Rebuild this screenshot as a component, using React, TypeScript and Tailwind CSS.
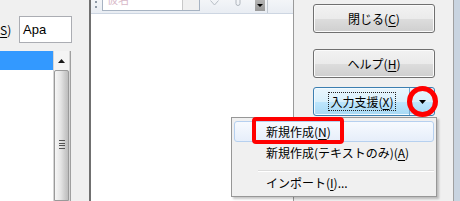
import React from 'react';

const Key: React.FC<{ k: string }> = ({ k }) => (
    <span className="underline underline-offset-[2px] decoration-1">{k}</span>
);

const LeftPane: React.FC = () => {
    return (
        <div className="flex w-[89px] shrink-0 flex-col">
            {/* label + text box */}
            <div className="flex h-[51px] items-start pt-[16px]">
                <div className="flex h-[27px] w-[19px] shrink-0 items-center overflow-hidden">
                    <span className="-ml-[4px] whitespace-nowrap leading-none">
                        (<Key k="S" />)
                    </span>
                </div>
                <div className="flex h-[27px] w-[53px] items-center border border-[#abadb3] bg-white px-[3px] font-['Liberation_Sans',sans-serif] text-[13px] leading-none">
                    Apa
                </div>
            </div>

            {/* list box with scrollbar */}
            <div className="flex flex-1">
                <div className="w-[53px] bg-white">
                    <div className="h-[19px] bg-[#3399ff]" />
                </div>
                <div className="flex w-[17px] flex-col border-x border-[#d6d6d6] bg-[#ececec]">
                    <div className="flex h-[19px] items-center justify-center bg-[#f4f4f4]">
                        <svg width="7" height="4" viewBox="0 0 7 4">
                            <polygon points="0,4 7,4 3.5,0" fill="#1a1a1a" />
                        </svg>
                    </div>
                    <div className="flex flex-1 justify-center rounded-t-[2px] border border-[#9a9a9a] bg-[linear-gradient(to_right,#f6f6f6_0%,#e4e4e4_45%,#cdcdcd_75%,#bdbdbd_100%)]">
                        <div className="mt-[69px] flex h-[9px] w-[6px] flex-col justify-between">
                            <div className="h-[1px] bg-[#555]" />
                            <div className="h-[1px] bg-[#555]" />
                            <div className="h-[1px] bg-[#555]" />
                            <div className="h-[1px] bg-[#555]" />
                        </div>
                    </div>
                </div>
                <div className="flex-1 border-l border-[#a0a0a0] bg-[#f0f0f0]" />
            </div>
        </div>
    );
};

const EditorPane: React.FC = () => {
    return (
        <div className="flex w-[205px] shrink-0 flex-col border-l-2 border-r border-l-[#707070] border-r-[#9a9a9a] bg-white">
            <div className="flex h-[14px] items-start border-b border-[#cdd6e2] bg-[linear-gradient(to_bottom,#f3f5f8,#e9edf3)]">
                {/* gripper */}
                <div className="ml-[4px] mt-[1px] flex flex-col gap-[3px]">
                    <div className="h-[2px] w-[2px] bg-[#8e99a6]" />
                    <div className="h-[2px] w-[2px] bg-[#8e99a6]" />
                </div>
                {/* combo box */}
                <div className="ml-[5px] flex h-[11px] w-[98px] overflow-hidden border-x border-b border-[#a7b3c2] bg-white">
                    <div className="flex-1 overflow-hidden pl-[4px] text-[11px] leading-none text-[#d8b8c8]">
                        <span className="relative -top-[6px]">仮名</span>
                    </div>
                    <div className="w-[17px] border-l border-[#c8c8c8] bg-[#f0f0f0]" />
                </div>
                {/* faded tool icons */}
                <svg className="ml-[10px]" width="9" height="6" viewBox="0 0 9 6">
                    <path d="M0.5 0.5 L4.5 5 L8.5 0.5" fill="none" stroke="#b8bec6" strokeWidth="1" />
                </svg>
                <svg className="ml-[16px]" width="6" height="6" viewBox="0 0 6 6">
                    <path d="M1 0 V3.5 A2 2 0 0 0 5 3.5 V0" fill="none" stroke="#b0b6be" strokeWidth="1" />
                </svg>
                <div className="ml-[14px] flex h-[11px] w-[10px] items-center justify-center bg-[linear-gradient(to_bottom,#b4b4b4,#999999)]">
                    <svg width="6" height="3" viewBox="0 0 6 3">
                        <polygon points="0,0 6,0 3,3" fill="#000" />
                    </svg>
                </div>
                <div className="ml-[2px] h-[13px] w-[1px] bg-[#c2c9d2]" />
            </div>
            <div className="flex-1 bg-white" />
        </div>
    );
};

const greyBtn =
    'flex h-[29px] w-[122px] items-center justify-center rounded-[3px] border border-[#707070] bg-[linear-gradient(to_bottom,#f2f2f2_0%,#ebebeb_50%,#dddddd_51%,#cfcfcf_100%)] shadow-[inset_0_0_0_1px_#fbfbfb] leading-none';

const ButtonPane: React.FC = () => {
    return (
        <div className="flex w-[159px] shrink-0 flex-col pl-[19px]">
            <div className={`${greyBtn} mt-[4px]`}>
                閉じる(<Key k="C" />)
            </div>
            <div className={`${greyBtn} mt-[16px]`}>
                ヘルプ(<Key k="H" />)
            </div>
            <div className="mt-[9px] flex h-[29px] w-[122px] rounded-[3px] border border-[#3c7fb1] bg-[linear-gradient(to_bottom,#eaf6fd_0%,#d9f0fc_50%,#bee6fd_51%,#a7d9f5_100%)] shadow-[inset_0_0_0_1px_#f2faff]">
                <div className="flex w-[95px] items-center justify-center pl-[1px]">
                    <span className="flex h-[19px] items-center border border-dotted border-[#222] px-[1px] leading-none">
                        入力支援(<Key k="X" />)
                    </span>
                </div>
                <div className="w-[1px] bg-[#6fa7cf]" />
                <div className="flex flex-1 items-center justify-center">
                    <svg width="7" height="4" viewBox="0 0 7 4">
                        <polygon points="0,0 7,0 3.5,4" fill="#000" />
                    </svg>
                </div>
            </div>
        </div>
    );
};

const PopupMenu: React.FC = () => {
    return (
        <div className="absolute left-[231px] top-[117px] w-[206px] border border-[#979797] bg-[#f0f0f0] px-[2px] pt-[3px] pb-[3px] leading-none shadow-[2px_2px_2px_rgba(0,0,0,0.22)]">
            <div className="flex h-[21px] items-center rounded-[3px] border border-[#b6d0ef] bg-[linear-gradient(to_bottom,#f7fafe,#e6eefa)] pl-[31px]">
                新規作成(<Key k="N" />)
            </div>
            <div className="flex h-[21px] items-center pl-[32px]">
                新規作成(テキストのみ)(<Key k="A" />)
            </div>
            <div className="ml-[24px] mt-[7px] h-[2px] border-t border-b border-t-[#dcdcdc] border-b-white" />
            <div className="flex h-[21px] items-center pl-[32px]">
                インポート(<Key k="I" />)...
            </div>
        </div>
    );
};

export default function App() {
    return (
        <div className="relative flex h-[201px] w-[460px] overflow-hidden bg-[#f0f0f0] font-['Noto_Sans_CJK_JP',sans-serif] text-[12px] text-black">
            <LeftPane />
            <EditorPane />
            <ButtonPane />
            <div className="flex-1 border-l border-[#a0a0a0] bg-[#c9d4e0]" />

            <PopupMenu />

            {/* red annotation marks */}
            <div className="absolute left-[252px] top-[117px] h-[27px] w-[92px] rounded-[4px] border-4 border-[#ff0000]" />
            <div className="absolute left-[407px] top-[86px] h-[31px] w-[31px] rounded-full border-[5px] border-[#ff0000]" />
        </div>
    );
}
